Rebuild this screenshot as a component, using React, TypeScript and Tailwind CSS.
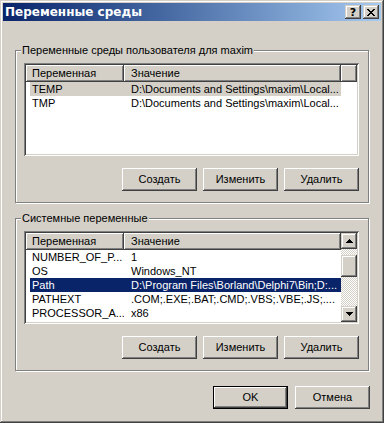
import React from "react";

const raised =
  "bg-[#d4d0c8] shadow-[inset_-1px_-1px_#404040,inset_1px_1px_#ffffff,inset_-2px_-2px_#808080,inset_2px_2px_#d4d0c8]";
const raisedLight =
  "bg-[#d4d0c8] shadow-[inset_-1px_-1px_#404040,inset_1px_1px_#d4d0c8,inset_-2px_-2px_#808080,inset_2px_2px_#ffffff]";

type Row = [string, string];

function Arrow({ up }: { up: boolean }) {
  return (
    <svg width="7" height="4" viewBox="0 0 7 4" shapeRendering="crispEdges">
      {up ? (
        <g fill="#000">
          <rect x="3" y="0" width="1" height="1" />
          <rect x="2" y="1" width="3" height="1" />
          <rect x="1" y="2" width="5" height="1" />
          <rect x="0" y="3" width="7" height="1" />
        </g>
      ) : (
        <g fill="#000">
          <rect x="0" y="0" width="7" height="1" />
          <rect x="1" y="1" width="5" height="1" />
          <rect x="2" y="2" width="3" height="1" />
          <rect x="3" y="3" width="1" height="1" />
        </g>
      )}
    </svg>
  );
}

function Scrollbar() {
  return (
    <div className="w-[16px] shrink-0 flex flex-col">
      <div className={`h-[16px] shrink-0 flex items-center justify-center ${raisedLight}`}>
        <Arrow up />
      </div>
      <div className="flex-1 flex flex-col bg-[conic-gradient(#ffffff_25%,#d4d0c8_0_50%,#ffffff_0_75%,#d4d0c8_0)] bg-[length:2px_2px]">
        <div className={`mt-[6px] h-[22px] ${raisedLight}`} />
      </div>
      <div className={`h-[16px] shrink-0 flex items-center justify-center ${raisedLight}`}>
        <Arrow up={false} />
      </div>
    </div>
  );
}

function ListView({
  rows,
  selected,
  focused,
  scroll,
}: {
  rows: Row[];
  selected: number;
  focused: boolean;
  scroll: boolean;
}) {
  return (
    <div className="h-[93px] p-[2px] bg-white flex shadow-[inset_1px_1px_#808080,inset_-1px_-1px_#ffffff,inset_2px_2px_#404040,inset_-2px_-2px_#d4d0c8]">
      <div className="flex-1 min-w-0 flex flex-col overflow-hidden">
        <div className="flex h-[17px] shrink-0 leading-[17px]">
          <div className={`w-[98px] shrink-0 pl-[6px] ${raised}`}>Переменная</div>
          <div className={`w-[217px] shrink-0 pl-[7px] ${raised}`}>Значение</div>
          <div className={`flex-1 ${raised}`} />
        </div>
        {rows.map((r, i) => {
          const sel = i === selected;
          const hl = sel ? (focused ? "bg-[#0a246a] text-white" : "bg-[#d4d0c8]") : "";
          return (
            <div key={i} className="flex h-[14px] shrink-0 leading-[14px] w-[315px] pl-[4px]">
              <div className={`flex flex-1 ${hl}`}>
                <div className="w-[94px] shrink-0 pl-[2px] whitespace-nowrap overflow-hidden">{r[0]}</div>
                <div className="flex-1 pl-[7px] whitespace-nowrap overflow-hidden">{r[1]}</div>
              </div>
            </div>
          );
        })}
      </div>
      {scroll && <Scrollbar />}
    </div>
  );
}

function Btn({ label, def }: { label: string; def?: boolean }) {
  return (
    <div
      className={`w-[75px] h-[23px] flex items-center justify-center ${raised} ${
        def ? "border border-black" : ""
      }`}
    >
      {label}
    </div>
  );
}

function Group({
  title,
  className,
  children,
}: {
  title: string;
  className?: string;
  children: React.ReactNode;
}) {
  return (
    <div
      className={`relative mx-[12px] border border-[#808080] shadow-[1px_1px_0_#ffffff,inset_1px_1px_0_#ffffff] pl-[8px] pr-[9px] pt-[12px] pb-[11px] ${
        className ?? ""
      }`}
    >
      <span className="absolute left-[5px] top-[-7px] px-[1px] bg-[#d4d0c8] leading-[13px] whitespace-nowrap">
        {title}
      </span>
      {children}
    </div>
  );
}

function CloseGlyph() {
  const px: [number, number, number][] = [
    [0, 0, 2], [6, 0, 2],
    [1, 1, 2], [5, 1, 2],
    [2, 2, 4],
    [3, 3, 2],
    [2, 4, 4],
    [1, 5, 2], [5, 5, 2],
    [0, 6, 2], [6, 6, 2],
  ];
  return (
    <svg width="8" height="7" viewBox="0 0 8 7" shapeRendering="crispEdges">
      {px.map(([x, y, w], i) => (
        <rect key={i} x={x} y={y} width={w} height={1} fill="#000" />
      ))}
    </svg>
  );
}

export default function App() {
  const userRows: Row[] = [
    ["TEMP", "D:\\Documents and Settings\\maxim\\Local..."],
    ["TMP", "D:\\Documents and Settings\\maxim\\Local..."],
  ];
  const sysRows: Row[] = [
    ["NUMBER_OF_P...", "1"],
    ["OS", "Windows_NT"],
    ["Path", "D:\\Program Files\\Borland\\Delphi7\\Bin;D:..."],
    ["PATHEXT", ".COM;.EXE;.BAT;.CMD;.VBS;.VBE;.JS;...."],
    ["PROCESSOR_A...", "x86"],
  ];
  return (
    <div className="w-[384px] h-[423px] p-[3px] bg-[#d4d0c8] text-black text-[11px] font-['Liberation_Sans',Arial,sans-serif] flex flex-col shadow-[inset_-1px_-1px_#404040,inset_1px_1px_#d4d0c8,inset_-2px_-2px_#808080,inset_2px_2px_#ffffff]">
      <div className="h-[18px] shrink-0 flex items-center pl-[2px] pr-[2px] bg-gradient-to-r from-[#0a246a] to-[#a6caf0]">
        <span className="flex-1 text-white font-bold text-[12px] font-['DejaVu_Sans',sans-serif] leading-[18px] whitespace-nowrap">
          Переменные среды
        </span>
        <div className="flex gap-[2px]">
          <div className={`w-[16px] h-[14px] flex items-center justify-center ${raisedLight}`}>
            <span className="font-['DejaVu_Sans',sans-serif] font-bold text-[11px] leading-[11px] mt-[1px]">?</span>
          </div>
          <div className={`w-[16px] h-[14px] flex items-center justify-center ${raisedLight}`}>
            <CloseGlyph />
          </div>
        </div>
      </div>

      <Group title="Переменные среды пользователя для maxim" className="mt-[29px]">
        <ListView rows={userRows} selected={0} focused={false} scroll={false} />
        <div className="mt-[12px] flex justify-end gap-[6px]">
          <Btn label="Создать" />
          <Btn label="Изменить" />
          <Btn label="Удалить" />
        </div>
      </Group>

      <Group title="Системные переменные" className="mt-[15px]">
        <ListView rows={sysRows} selected={2} focused={true} scroll={true} />
        <div className="mt-[12px] flex justify-end gap-[6px]">
          <Btn label="Создать" />
          <Btn label="Изменить" />
          <Btn label="Удалить" />
        </div>
      </Group>

      <div className="mt-[15px] mr-[11px] flex justify-end gap-[7px]">
        <Btn label="OK" def />
        <Btn label="Отмена" />
      </div>
    </div>
  );
}
